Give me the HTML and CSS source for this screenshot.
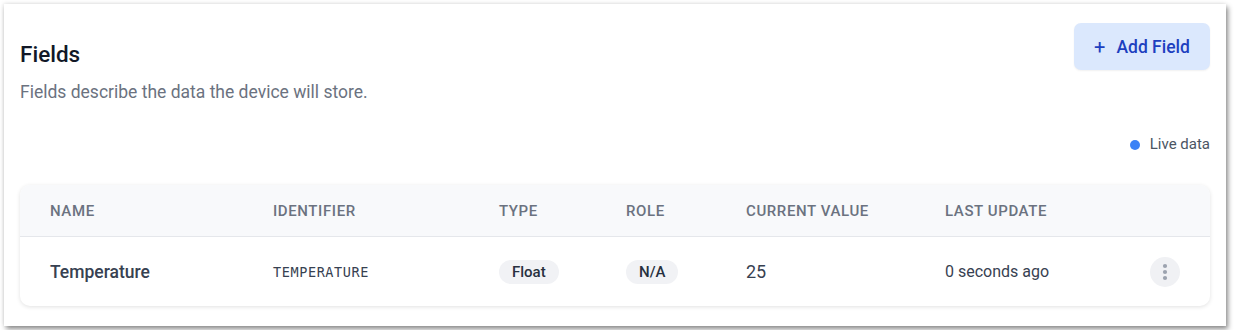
FILE: index.html
```html
<!DOCTYPE html>
<html lang="en">
<head>
  <meta charset="UTF-8" />
  <title>Fields</title>
  <link rel="stylesheet" href="styles.css">
</head>
<body>

<div class="panel">
  <div class="panel-head">
    <div>
      <h2 class="title">Fields</h2>
      <p class="subtitle">Fields describe the data the device will store.</p>
    </div>
    <button class="add-btn"><span class="plus">+</span>Add Field</button>
  </div>

  <div class="live"><span class="dot"></span>Live data</div>

  <div class="table">
    <div class="row head">
      <div>Name</div>
      <div>Identifier</div>
      <div>Type</div>
      <div>Role</div>
      <div>Current Value</div>
      <div>Last Update</div>
      <div></div>
    </div>
    <div class="row body">
      <div class="name">Temperature</div>
      <div class="ident">TEMPERATURE</div>
      <div><span class="pill">Float</span></div>
      <div><span class="pill">N/A</span></div>
      <div class="value">25</div>
      <div class="updated">0 seconds ago</div>
      <div class="actions">
        <button class="kebab">
          <svg width="6" height="18" viewBox="0 0 6 18"><circle cx="3" cy="3" r="2.1"/><circle cx="3" cy="9" r="2.1"/><circle cx="3" cy="15" r="2.1"/></svg>
        </button>
      </div>
    </div>
  </div>
</div>

</body>
</html>
```

FILE: styles.css
```css
body {
  margin: 0;
  padding: 4px;
  background: #fff;
  font-family: Roboto, 'Liberation Sans', sans-serif;
}
.panel {
  width: 1222px;
  height: 322px;
  box-sizing: border-box;
  padding: 19px 16px 0 16px;
  background: #fff;
  box-shadow: 2px 3px 5px rgba(0,0,0,0.45), -1px -1px 4px rgba(0,0,0,0.08);
}
.panel-head {
  display: flex;
  justify-content: space-between;
  align-items: flex-start;
}
.title {
  margin: 18px 0 0 0;
  font-size: 22.5px;
  font-weight: 500;
  color: #111827;
  line-height: 26px;
}
.subtitle {
  margin: 15px 0 0 0;
  font-size: 17.5px;
  color: #6b7280;
  line-height: 20px;
}
.add-btn {
  height: 47px;
  width: 136px;
  border: none;
  border-radius: 7px;
  background: #dbe8fd;
  color: #1d3fc0;
  font-family: inherit;
  font-size: 17.5px;
  font-weight: 500;
  display: flex;
  align-items: center;
  justify-content: center;
  cursor: pointer;
  box-shadow: 0 1px 2px rgba(0,0,0,0.06);
}
.plus {
  font-size: 20px;
  margin-right: 11px;
  font-weight: 400;
}
.live {
  display: flex;
  justify-content: flex-end;
  align-items: center;
  margin-top: 34px;
  font-size: 15px;
  line-height: 17px;
  color: #4b5563;
}
.dot {
  width: 10px;
  height: 10px;
  border-radius: 50%;
  background: #3b82f6;
  margin-right: 10px;
}
.table {
  margin-top: 32px;
  border-radius: 10px;
  overflow: hidden;
  box-shadow: 0 1px 4px rgba(0,0,0,0.12);
}
.row {
  display: grid;
  grid-template-columns: 223px 226px 127px 120px 199px 205px 90px;
  align-items: center;
}
.row > div {
  padding-left: 30px;
}
.head {
  height: 51px;
  background: #f8f9fb;
  border-bottom: 1px solid #e5e7eb;
  font-size: 15px;
  font-weight: 500;
  text-transform: uppercase;
  letter-spacing: 0.6px;
  color: #6b7280;
}
.body {
  height: 69px;
  color: #374151;
}
.name {
  font-size: 17.5px;
  font-weight: 500;
  color: #374151;
}
.ident {
  font-family: 'DejaVu Sans Mono', monospace;
  font-size: 13.5px;
  letter-spacing: 0.6px;
  color: #374151;
}
.pill {
  display: inline-block;
  padding: 3px 13px;
  border-radius: 12px;
  background: #f1f2f5;
  font-size: 15px;
  font-weight: 500;
  color: #27303f;
  line-height: 18px;
}
.value {
  font-size: 18px;
  color: #374151;
}
.updated {
  font-size: 16px;
  color: #374151;
}
.actions {
  display: flex;
  justify-content: flex-start;
}
.kebab {
  width: 30px;
  height: 30px;
  border-radius: 50%;
  border: none;
  background: #f0f1f4;
  fill: #9ca3af;
  display: flex;
  align-items: center;
  justify-content: center;
  padding: 0;
}
```
